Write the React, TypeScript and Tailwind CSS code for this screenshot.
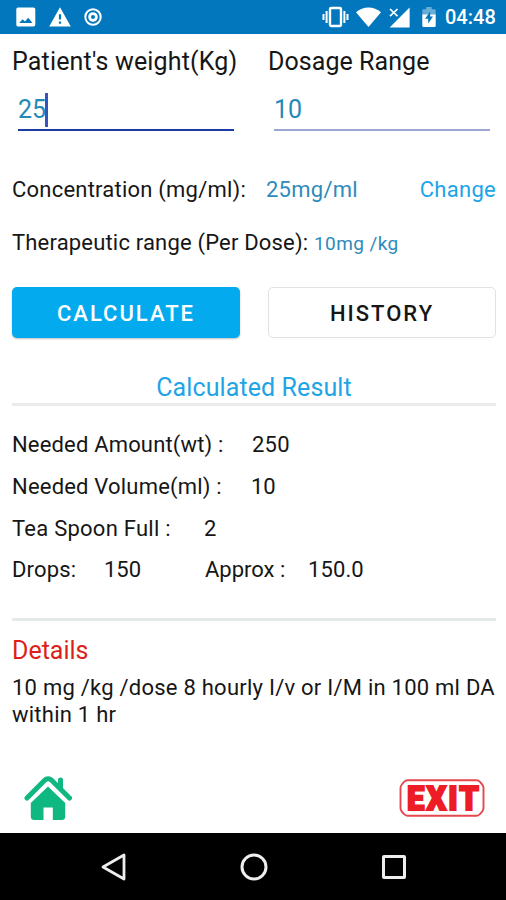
import type { ReactNode } from "react";

function StatusBar() {
  return (
    <header className="flex h-[34px] items-center justify-between bg-[#0277bd] pl-4 pr-[10px] text-white">
      <div className="flex items-center gap-[13px]">
        <svg width="20" height="20" viewBox="0 0 20 20">
          <path fill="currentColor" fillRule="evenodd" d="M2 .5h15.5a1.8 1.8 0 0 1 1.8 1.8v15.4a1.8 1.8 0 0 1-1.8 1.8H2A1.8 1.8 0 0 1 .3 17.7V2.300A1.800 1.800 0 0 1 2 .5ZM3.200 16h13.300l-4.300-5.200-3.200 3.600-2.400-2.200Z" />
        </svg>
        <svg width="22" height="20" viewBox="0 0 22 20">
          <path fill="currentColor" fillRule="evenodd" d="M11 .3 21.8 19.5H.2ZM9.900 7.200v5.200h2.200V7.200Zm0 7.200v2.300h2.200v-2.300Z" />
        </svg>
        <svg width="18" height="18" viewBox="0 0 18 18">
          <circle cx="9" cy="9" r="7.700" fill="none" stroke="currentColor" strokeWidth="2" />
          <circle cx="9" cy="9" r="3.400" fill="none" stroke="currentColor" strokeWidth="2.800" />
        </svg>
      </div>
      <div className="flex items-center">
        <svg width="27" height="22" viewBox="0 0 27 22">
          <rect x="8" y="2" width="11" height="18" rx="1.200" fill="none" stroke="currentColor" strokeWidth="2.400" />
          <path d="M4.600 5v12M1.500 8v6M22.400 5v12M25.500 8v6" stroke="currentColor" strokeWidth="2" />
        </svg>
        <svg width="25" height="20" viewBox="0 0 25 20" className="ml-[7px]">
          <path fill="currentColor" d="M0 5.200C7-1.200 18-1.200 25 5.200L12.500 20Z" />
        </svg>
        <svg width="21" height="21" viewBox="0 0 21 21" className="ml-[8px]">
          <path fill="currentColor" d="M20.600.5v20H.6Z" />
          <path d="m1 2 7.500 7.200M8.500 2 1 9.200" stroke="currentColor" strokeWidth="1.700" />
        </svg>
        <svg width="14" height="20" viewBox="0 0 14 20" className="ml-[12px]">
          <path fill="currentColor" opacity=".4" d="M4.200 0h5.500v2.200h2.800a1.200 1.200 0 0 1 1.200 1.200V8H.3V3.400a1.200 1.200 0 0 1 1.200-1.200h2.700Z" />
          <path fill="currentColor" d="M.3 7.500h13.400v11.200a1.200 1.200 0 0 1-1.200 1.200h-11A1.200 1.200 0 0 1 .3 18.700Z" />
          <path fill="#0277bd" d="M8.200 4.500 3 11.800h3.200V16.500L11 9.600H8.200Z" />
        </svg>
        <span className="ml-[9px] w-[51px] whitespace-nowrap pt-px text-[20px] leading-[33px] font-medium">04:48</span>
      </div>
    </header>
  );
}

function Field({ label, value, focused }: { label: string; value: string; focused?: boolean }) {
  return (
    <label className="block">
      <span
        className={
          focused
            ? "block h-[34px] whitespace-nowrap text-[25px] leading-[34px] tracking-[0.17px]"
            : "block h-[34px] whitespace-nowrap text-[25px] leading-[34px] tracking-[0.06px]"
        }
      >
        {label}
      </span>
      <span
        className={
          focused
            ? "ml-1.5 mt-[11px] mr-1.5 flex h-[41px] items-center border-b-2 border-[#1c3ba8] text-[25px] text-[#2589b8]"
            : "ml-1.5 mt-[11px] mr-1.5 flex h-[41px] items-center border-b-2 border-[#9ba6d3] text-[25px] text-[#2589b8]"
        }
      >
        {value}
        {focused && <i className="-ml-px h-[34px] w-[2.5px] bg-[#3355bd]" />}
      </span>
    </label>
  );
}

function ResultRow({ children }: { children: ReactNode }) {
  return <div className="flex h-[41.7px] items-center whitespace-nowrap text-[22px]">{children}</div>;
}

function HomeIcon() {
  return (
    <svg width="48" height="46" viewBox="0 0 48 46">
      <path d="M3 23 20.700 5.200a4.900 4.900 0 0 1 6.900 0L45.500 23" fill="none" stroke="#0fb781" strokeWidth="5" strokeLinecap="round" />
      <path d="M36.500 5V13" stroke="#0fb781" strokeWidth="5" strokeLinecap="round" />
      <path d="M24 11.500 41.200 28v13.500a3.500 3.500 0 0 1-3.500 3.500H28.800V32.500h-9.300v12.500h-9.200A3.500 3.500 0 0 1 6.800 41.500V28Z" fill="#0fb781" />
    </svg>
  );
}

function ExitIcon() {
  return (
    <svg width="86" height="38" viewBox="0 0 86 38">
      <path d="M8.500 1.200h69q2 0 3.500 1.800l2.200 2.500q1.300 1.500 1.300 3.500v20q0 2-1.300 3.500L81 35q-1.500 1.800-3.500 1.800h-69q-2 0-3.500-1.800l-2.200-2.500Q1.500 31 1.500 29V9q0-2 1.300-3.500L5 3q1.500-1.800 3.500-1.800Z" fill="#fff" stroke="#e5474c" strokeWidth="1.900" />
      <text x="45" y="30.500" textAnchor="middle" textLength="74" lengthAdjust="spacingAndGlyphs" letterSpacing="2.200" fontFamily="Roboto, sans-serif" fontWeight="900" fontSize="33" fill="#ee1c25" stroke="#ee1c25" strokeWidth="2">EXIT</text>
    </svg>
  );
}

export default function App() {
  return (
    <div className="flex h-[900px] w-[506px] flex-col overflow-hidden bg-white font-['Roboto',sans-serif] text-[#161616]">
      <StatusBar />
      <main className="flex flex-1 flex-col pl-3 pr-2.5">
        <section className="mt-[11px] grid h-[118px] grid-cols-2 items-start gap-x-7">
          <Field label="Patient's weight(Kg)" value="25" focused />
          <Field label="Dosage Range" value="10" />
        </section>
        <div className="flex h-[53px] items-center whitespace-nowrap text-[22px]">
          <span className="w-[254px] tracking-[0.22px]">Concentration (mg/ml):</span>
          <span className="tracking-[0.25px] text-[#2f8abc]">25mg/ml</span>
          <a className="ml-auto tracking-[0.3px] text-[#1aa5e8]">Change</a>
        </div>
        <div className="flex h-[53px] items-baseline whitespace-nowrap text-[22px] leading-[53px]">
          <span className="w-[302px] tracking-[0.18px]">Therapeutic range (Per Dose):</span>
          <span className="text-[19px] tracking-[0.4px] text-[#2f8abc]">10mg /kg</span>
        </div>
        <div className="mt-[18px] grid h-[51px] grid-cols-2 gap-x-7">
          <button className="rounded-[5px] bg-[#03abee] pt-0.5 text-[22px] font-medium tracking-[2px] text-white shadow-[0_1px_2px_rgba(0,0,0,0.25)]">CALCULATE</button>
          <button className="rounded-[5px] border-[1.5px] border-[#e2e2e2] pt-0.5 text-[22px] font-medium tracking-[2px]">HISTORY</button>
        </div>
        <h2 className="mt-[32px] h-[36px] border-b-[3px] border-[#ebebeb] text-center text-[25px] leading-[36px] tracking-[0.1px] text-[#1fa4e6]">Calculated Result</h2>
        <section className="mt-[18px] h-[194px]">
          <ResultRow><span className="w-[240px] tracking-[0.17px]">Needed Amount(wt) :</span><span className="tracking-[0.2px]">250</span></ResultRow>
          <ResultRow><span className="w-[239px] tracking-[0.2px]">Needed Volume(ml) :</span><span>10</span></ResultRow>
          <ResultRow><span className="w-[192px] tracking-[0.25px]">Tea Spoon Full :</span><span>2</span></ResultRow>
          <ResultRow>
            <span className="w-[92px] tracking-[0.15px]">Drops:</span>
            <span className="w-[101px]">150</span>
            <span className="w-[103px]">Approx :</span>
            <span className="tracking-[0.1px]">150.0</span>
          </ResultRow>
        </section>
        <section className="border-t-[3px] border-[#e6e9ea] pt-[13px]">
          <h3 className="text-[25px] leading-[34px] text-[#dc1f1a]">Details</h3>
          <p className="mt-[7px] whitespace-nowrap text-[22px] leading-[26.5px] tracking-[0.24px]">
            10 mg /kg /dose 8 hourly I/v or I/M in 100 ml DA<br />within 1 hr
          </p>
        </section>
        <div className="mt-auto mb-[12px] flex items-center justify-between pl-3 pr-[11px]">
          <HomeIcon />
          <ExitIcon />
        </div>
      </main>
      <nav className="flex h-[67px] items-center justify-between bg-black pl-[101px] pr-[99px] text-[#eee]">
        <svg width="26" height="30" viewBox="0 0 26 30"><path d="M23 3v24L2 15Z" fill="none" stroke="currentColor" strokeWidth="2.800" strokeLinejoin="round" /></svg>
        <svg width="28" height="28" viewBox="0 0 28 28"><circle cx="14" cy="14" r="12" fill="none" stroke="currentColor" strokeWidth="3" /></svg>
        <svg width="26" height="26" viewBox="0 0 26 26"><rect x="2.500" y="2.500" width="21" height="21" rx=".5" fill="none" stroke="currentColor" strokeWidth="3" /></svg>
      </nav>
    </div>
  );
}
